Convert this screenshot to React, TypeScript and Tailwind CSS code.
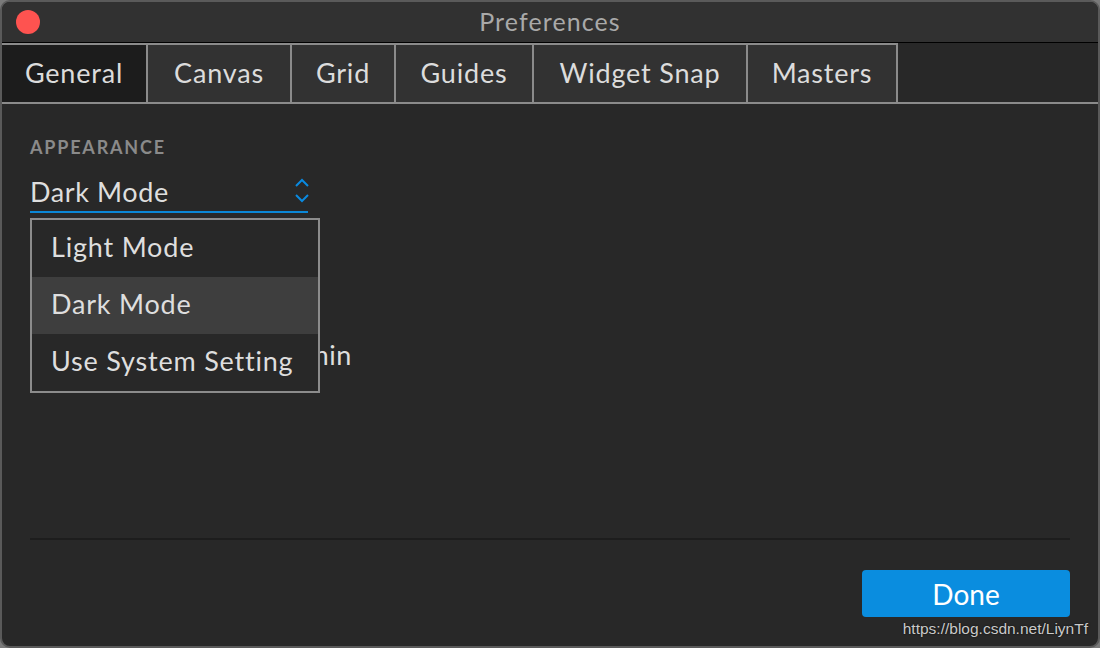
import React from "react";

const tabs = [
  { label: "General", w: "w-[146px]", active: true },
  { label: "Canvas", w: "w-[144px]" },
  { label: "Grid", w: "w-[104px]" },
  { label: "Guides", w: "w-[138px]" },
  { label: "Widget Snap", w: "w-[214px]" },
  { label: "Masters", w: "w-[150px]" },
];

const options = ["Light Mode", "Dark Mode", "Use System Setting"];

export default function App() {
  return (
    <div className="w-[1100px] h-[648px] bg-[#7a7a7a] font-['Lato',sans-serif]">
      <div className="relative w-full h-full flex flex-col bg-[#282828] border-2 border-[#5a5a5a] rounded-[10px] overflow-hidden">
        {/* Title bar */}
        <div className="relative h-[41px] shrink-0 flex items-center justify-center bg-[#313131] border-b border-black">
          <div className="absolute left-[14px] top-[8px] w-[24px] h-[24px] rounded-full bg-[#fe5350]" />
          <span className="text-[25px] text-[#a9a9a9] tracking-[1.1px]">Preferences</span>
        </div>

        {/* Tabs */}
        <div className="h-[61px] shrink-0 flex border-b-2 border-[#8b8b8b]">
          {tabs.map((t) => (
            <div
              key={t.label}
              className={`${t.w} h-full flex items-center justify-center border-t-2 border-r-2 border-[#8b8b8b] text-[27px] tracking-[0.8px] text-[#dcdcdc] ${
                t.active ? "bg-[#1c1c1c]" : "bg-[#323232]"
              }`}
            >
              {t.label}
            </div>
          ))}
        </div>

        {/* Body */}
        <div className="relative flex-1 px-[28px] pt-[33px]">
          <div className="text-[18px] leading-[20px] font-bold tracking-[1.8px] text-[#8a8a8a]">APPEARANCE</div>

          <div className="relative mt-[16px] w-[278px]">
            <div className="flex items-center justify-between h-[40px] border-b-2 border-[#0b87d6]">
              <span className="text-[27px] tracking-[0.6px] text-[#dedede]">Dark Mode</span>
              <svg width="16" height="28" viewBox="0 0 16 28" className="-mr-[2px] mb-[2px]" fill="none" stroke="#0a8ae0" strokeWidth="2">
                <path d="M2 9 L8 3 L14 9" />
                <path d="M2 18 L8 24 L14 18" />
              </svg>
            </div>

            {/* Dropdown menu */}
            <div className="absolute left-0 top-[45px] z-10 w-[290px] bg-[#282828] border-2 border-[#8c8c8c] flex flex-col">
              {options.map((o) => (
                <div
                  key={o}
                  className={`h-[57px] flex items-center pl-[19px] pb-[2px] text-[27px] tracking-[0.8px] text-[#dedede] ${
                    o === "Dark Mode" ? "bg-[#3e3e3e]" : ""
                  }`}
                >
                  {o}
                </div>
              ))}
            </div>
          </div>

          <div className="mt-[122px] w-[322px] text-right whitespace-nowrap text-[27px] tracking-[0.6px] text-[#dedede]">
            Auto-save every 10 min
          </div>
        </div>

        {/* Footer */}
        <div className="mx-[28px] h-[2px] bg-[#1d1d1d] shrink-0" />
        <div className="shrink-0 flex justify-end px-[28px] pt-[30px] pb-[29px]">
          <button className="w-[208px] h-[47px] rounded-[4px] bg-[#0a8ddf] text-white text-[28px] flex items-center justify-center">
            Done
          </button>
        </div>

        <div className="absolute right-[10px] bottom-[6px] text-[15.5px] text-[#cacaca] font-['Liberation_Sans',sans-serif] [text-shadow:0_0_2px_rgba(0,0,0,0.8)]">
          https://blog.csdn.net/LiynTf
        </div>
      </div>
    </div>
  );
}
